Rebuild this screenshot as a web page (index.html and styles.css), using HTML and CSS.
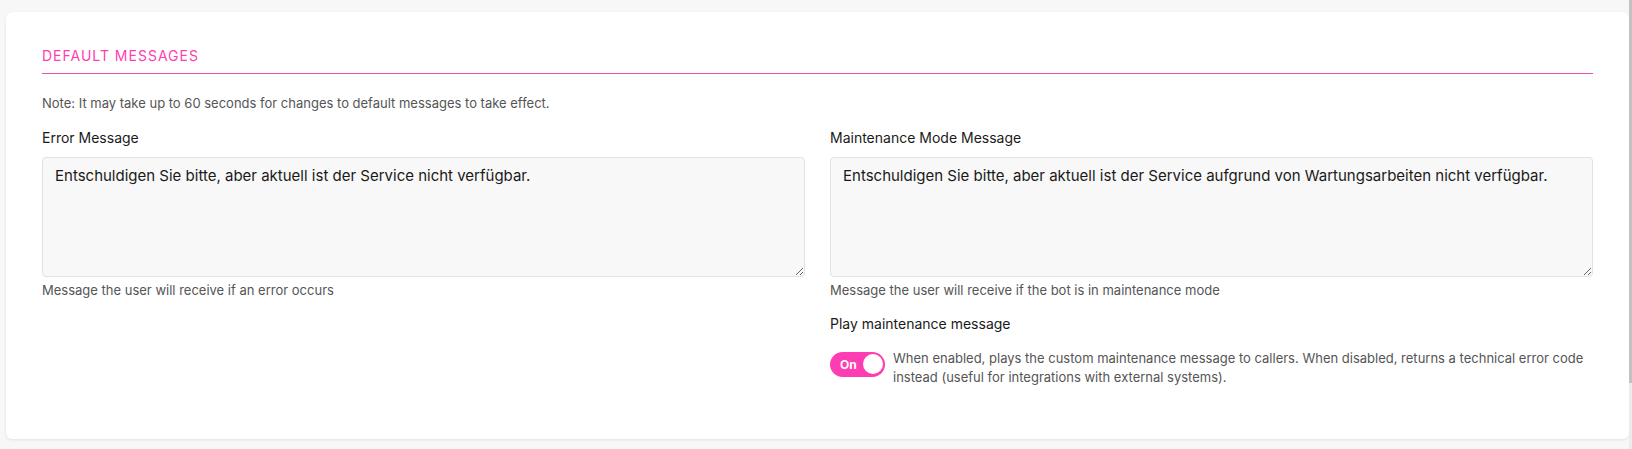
FILE: index.html
```html
<!DOCTYPE html>
<html lang="de">
<head>
  <meta charset="UTF-8" />
  <title>Default Messages</title>
  <link rel="stylesheet" href="styles.css">
</head>
<body>
  <div class="page">
    <div class="card">
      <div class="section-title">Default Messages</div>
      <p class="note">Note: It may take up to 60 seconds for changes to default messages to take effect.</p>

      <div class="columns">
        <div class="field">
          <label class="field-label" for="errorMessage">Error Message</label>
          <textarea class="field-input" id="errorMessage">Entschuldigen Sie bitte, aber aktuell ist der Service nicht verfügbar.</textarea>
          <div class="field-help">Message the user will receive if an error occurs</div>
        </div>

        <div class="field">
          <label class="field-label" for="maintenanceMessage">Maintenance Mode Message</label>
          <textarea class="field-input" id="maintenanceMessage">Entschuldigen Sie bitte, aber aktuell ist der Service aufgrund von Wartungsarbeiten nicht verfügbar.</textarea>
          <div class="field-help">Message the user will receive if the bot is in maintenance mode</div>

          <div class="field-label play-label">Play maintenance message</div>
          <div class="toggle-row">
            <div class="toggle">
              <span class="toggle-text">On</span>
              <span class="toggle-knob"></span>
            </div>
            <div class="toggle-desc">When enabled, plays the custom maintenance message to callers. When disabled, returns a technical error code instead (useful for integrations with external systems).</div>
          </div>
        </div>
      </div>
    </div>
  </div>
  <!-- schmale Scrollleiste rechts -->
  <div class="scrollbar"><div class="scrollbar-thumb"></div></div>
</body>
</html>
```

FILE: styles.css
```css
* {
  box-sizing: border-box;
}
html, body {
  margin: 0;
  padding: 0;
  height: 100%;
}
body {
  display: flex;
  background: #f7f7f7;
  font-family: "Inter", "Noto Sans", sans-serif;
  color: #1d1d1d;
}
.page {
  flex: 1;
  padding: 12px 0 0 6px;
}
/* weiße Karte */
.card {
  background: #fff;
  border-radius: 6px;
  box-shadow: 0 1px 3px rgba(0, 0, 0, 0.09);
  padding: 33px 36px 52px 36px;
}
.section-title {
  font-size: 14px;
  line-height: 22.5px;
  letter-spacing: 1px;
  text-transform: uppercase;
  color: #ff3db2;
  padding-bottom: 5px;
  border-bottom: 1px solid #f24cb5;
}
.note {
  margin: 19px 0 14px 0;
  font-size: 13px;
  line-height: 20px;
  color: #555;
}
.columns {
  display: grid;
  grid-template-columns: 1fr 1fr;
  column-gap: 25px;
}
.field {
  display: flex;
  flex-direction: column;
}
.field-label {
  font-size: 14px;
  line-height: 21px;
  color: #1a1a1a;
  margin-bottom: 9px;
}
.field-input {
  display: block;
  width: 100%;
  height: 120px;
  margin: 0;
  padding: 7px 12px;
  border: 1px solid #e2e2e2;
  border-radius: 4px;
  background: #f8f8f8;
  font-family: inherit;
  font-size: 15px;
  line-height: 21px;
  color: #1a1a1a;
  resize: vertical;
}
.field-help {
  margin-top: 4px;
  font-size: 13px;
  line-height: 18px;
  color: #555;
}
.play-label {
  margin-top: 14px;
  margin-bottom: 14px;
}
.toggle-row {
  display: flex;
  align-items: flex-start;
  gap: 8px;
}
/* Schalter */
.toggle {
  flex: none;
  margin-top: 4px;
  width: 55px;
  height: 25px;
  border-radius: 13px;
  background: #ff3db2;
  display: flex;
  align-items: center;
  justify-content: space-between;
  padding: 0 2px 0 10px;
}
.toggle-text {
  color: #fff;
  font-size: 12px;
  font-weight: 700;
}
.toggle-knob {
  width: 20px;
  height: 20px;
  border-radius: 50%;
  background: #fff;
}
.toggle-desc {
  padding-top: 1px;
  font-size: 13px;
  line-height: 19px;
  color: #555;
}
.scrollbar {
  flex: none;
  width: 3px;
  background: #ececec;
}
.scrollbar-thumb {
  height: 383px;
  background: #c2c2c2;
}
```
